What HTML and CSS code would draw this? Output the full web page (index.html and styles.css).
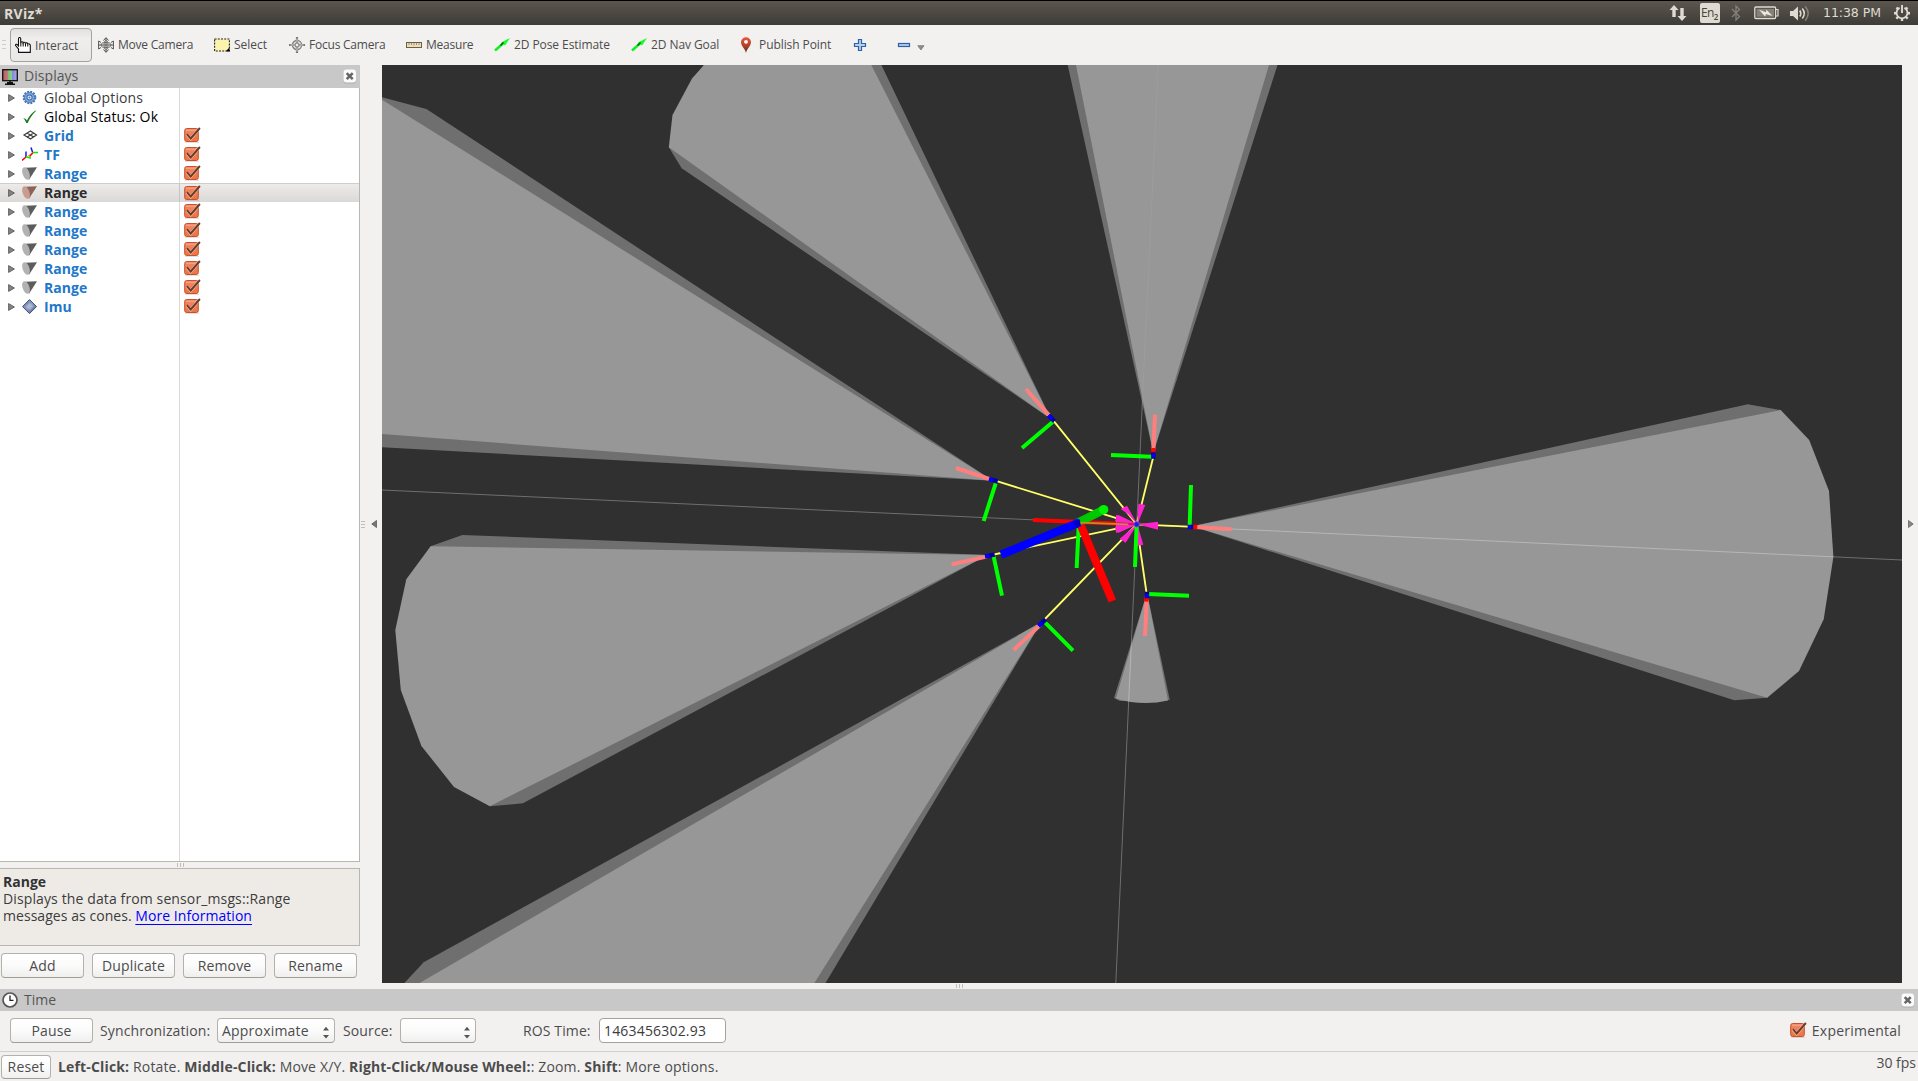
FILE: index.html
```html
<!DOCTYPE html>
<html lang="en">
<head>
<meta charset="utf-8">
<title>RViz*</title>
<link rel="stylesheet" href="styles.css">
</head>
<body>
<svg class="defs" aria-hidden="true">
  <defs>
    <linearGradient id="g-check" x1="0" y1="0" x2="0" y2="1"><stop offset="0" stop-color="#f0886a"/><stop offset="1" stop-color="#ee7340"/></linearGradient>
    <linearGradient id="g-pin" x1="0" y1="0" x2="0" y2="1"><stop offset="0" stop-color="#e8573a"/><stop offset=".55" stop-color="#b04028"/><stop offset="1" stop-color="#4c3520"/></linearGradient>
    <linearGradient id="g-screen"><stop offset="0" stop-color="#b85c66"/><stop offset=".33" stop-color="#c07878"/><stop offset=".34" stop-color="#74c074"/><stop offset=".66" stop-color="#8ed08e"/><stop offset=".67" stop-color="#8888d8"/><stop offset="1" stop-color="#aaaaee"/></linearGradient>
    <linearGradient id="g-imu" x1="0" y1="0" x2="1" y2="1"><stop offset="0" stop-color="#657ca4"/><stop offset=".5" stop-color="#8fa1c4"/><stop offset="1" stop-color="#46598a"/></linearGradient>
  </defs>
  <symbol id="check" viewBox="0 0 17 16">
    <path d="M1 15.300h14" stroke="#000" stroke-opacity=".15"/>
    <rect x=".7" y="1.500" width="13.600" height="13" rx="2" fill="url(#g-check)" stroke="#c8502a"/>
    <path d="M2 3.200h11" stroke="#f9b294" stroke-width=".8"/>
    <path d="M3 7.500l3.700 4.200L14 3" fill="none" stroke="#f6b196" stroke-width="3.200"/>
    <path d="M3 7.200l3.700 4.300L15.900 1" fill="none" stroke="#683c2c" stroke-width="1.900"/>
  </symbol>
  <symbol id="arrow" viewBox="0 0 7 8"><path d="M.6.600v6.800L6.400 4z" fill="#858585" stroke="#5a5a5a" stroke-width=".9"/></symbol>
  <symbol id="gear" viewBox="0 0 16 16">
    <circle cx="7.500" cy="7.500" r="5.700" fill="#8fb2de" stroke="#4474b4" stroke-width="2.200" stroke-dasharray="1.900 1.080"/>
    <circle cx="7.500" cy="7.500" r="4.800" fill="#8fb2de" stroke="#4f7dbb" stroke-width=".9"/>
    <circle cx="7.500" cy="7.500" r="2.600" fill="#dbe8f7" stroke="#3f6eae" stroke-width="1.100"/>
    <circle cx="7.500" cy="7.500" r="1" fill="#4f7dbb"/>
  </symbol>
  <symbol id="ok" viewBox="0 0 16 16"><path d="M1.200 9.300C2.500 9 3.800 9.800 4.900 11.500 7.300 7 10.200 3.600 13.600 1.500l.4.500C10.500 5.200 7.800 9.200 5.700 14H4.300C3.400 11.800 2.500 10.300 1.200 9.300z" fill="#1c7a1c"/></symbol>
  <symbol id="grid" viewBox="0 0 16 16"><path d="M8.500 3l6 4-6 4-6.500-4zM5 5l6.700 4M11.700 5l-6.500 4" fill="none" stroke="#3c3c3c" stroke-width="1.200"/></symbol>
  <symbol id="tf" viewBox="0 0 16 16">
    <path d="M0 13.500L4 10 M7.500 9.500L11 5.500" stroke="#f00" stroke-width="1.500"/>
    <path d="M4 10V4.500M10.500 5L9 .500" stroke="#1818e8" stroke-width="1.500"/>
    <path d="M4 10l5 1M11 5.500h5" stroke="#0e0" stroke-width="1.400"/>
    <path d="M4 10.500L8 7.500" stroke="#c8b820"/>
  </symbol>
  <symbol id="range" viewBox="0 0 16 16">
    <path d="M3.500 1.800L15 1.200 7 13.800z" fill="var(--side, #5c5c5c)"/>
    <ellipse cx="4" cy="7.500" rx="3.400" ry="6.600" transform="rotate(-19 4 7.500)" fill="var(--face, #b2b2b2)"/>
  </symbol>
  <symbol id="imu" viewBox="0 0 16 16"><path d="M7.500.600l7 7-7 7-7-7z" fill="url(#g-imu)" stroke="#3d4a6a"/><path d="M4 7.500l3.500-3.500 4 3.500L8 11z" fill="#fff" opacity=".28"/></symbol>
  <symbol id="close" viewBox="0 0 14 15">
    <rect x=".5" y="1" width="12.500" height="13.500" rx="3" fill="#999" opacity=".55"/>
    <rect x=".5" y=".5" width="12.500" height="13" rx="3" fill="#fbfbfb"/>
    <path d="M3.700 4.200l6 6M9.700 4.200l-6 6" stroke="#666" stroke-width="2.600"/>
  </symbol>
  <symbol id="nav" viewBox="0 0 16 16"><path d="M1 13.500L9 6.500" stroke="#1e2" stroke-width="2.500"/><path d="M7 5.500l9-4.500-5 7.500z" fill="#1f2"/><path d="M6.500 8.500l3-3" stroke="#075c10" stroke-width="1.500"/></symbol>
</svg>

<header class="titlebar">
  <span class="title">RViz*</span>
  <div class="indicators">
    <svg class="i-net" viewBox="0 0 18 18"><path d="M5 1l4.500 5H6.700v7H3.300V6H.5zM13 17l-4.500-5h2.800V4h3.400v8h2.800z" fill="#dfdbd2"/></svg>
    <span class="lang">En<sub>2</sub></span>
    <svg class="i-bt" viewBox="0 0 10 18"><path d="M1 5l7.500 7.500L5 16V2l3.500 3.500L1 13" fill="none" stroke="#85827a" stroke-width="1.300"/></svg>
    <svg class="i-bat" viewBox="0 0 25 14"><rect x=".8" y="1" width="20.800" height="11.500" rx="1" fill="none" stroke="#dfdbd2" stroke-width="1.300"/><rect x="2.500" y="2.800" width="17.500" height="8" fill="#85827a"/><path d="M22 3.500h2v6.500h-2" fill="none" stroke="#dfdbd2" stroke-width="1.200"/><path d="M5 3.800l7 2.500.5-2.500 6 6.200-6.500-2-.8 2.600z" fill="#eeeae2"/></svg>
    <svg class="i-vol" viewBox="0 0 20 17"><path d="M0 6h3l5-4.500v14L3 11H0z" fill="#dfdbd2"/><path d="M9.800 5.500q2 3 0 6M12.300 3.500q4 5 0 10" fill="none" stroke="#dfdbd2" stroke-width="1.600"/><path d="M15.200 1.300q6 7.200 0 14.400" fill="none" stroke="#85827a" stroke-width="1.500"/></svg>
    <span class="clock">11:38 PM</span>
    <svg class="i-power" viewBox="0 0 16 16"><path d="M10.400 2.900a5.500 5.500 0 1 1-4.800 0M8 0v8" fill="none" stroke="#dfdbd2" stroke-width="1.900"/><path d="M2.500 2.500l1.700 1.700M0 8.300h2.500M2.300 13.700L4 12M8 13.500V16M13.700 13.700L12 12M13.500 8.300H16M13.500 2.500l-1.700 1.700" stroke="#dfdbd2" stroke-width="2.400"/></svg>
  </div>
</header>

<nav class="toolbar">
  <div class="grip"></div>
  <div class="tool active"><svg viewBox="0 0 16 16"><path d="M3.500 15.400V12L.6 8.500c-.3-1.600 1.200-1.600 2-.6L3.500 9V1.500c.2-1.300 2-1.300 2.200 0V6l.4-.8c.5-.8 2-.6 2 .5.400-.7 2.200-.6 2.300.6.500-.8 2.200-.6 2.300.7 1-.6 2.600-.1 2.600 1.400v7z" fill="#fff" stroke="#111" stroke-width="1.100"/><path d="M5.800 6v3.500M8.200 6v3.500M10.500 6.500v3M12.800 7.500v2" stroke="#111"/></svg><span>Interact</span></div>
  <div class="tool tight"><svg viewBox="0 0 16 16"><path d="M8 1v14M0 8h16M5.500 3.500L8 .600l2.500 2.900M5.500 12.500L8 15.400l2.500-2.900M3 5.500L.6 4v8L3 10.500M13 5.500L15.400 4v8L13 10.500" fill="none" stroke="#555"/><ellipse cx="8" cy="8" rx="5" ry="2.500" fill="none" stroke="#666"/><ellipse cx="8" cy="8" rx="2" ry="5" fill="none" stroke="#777"/></svg><span>Move Camera</span></div>
  <div class="tool"><svg viewBox="0 0 16 16"><rect x=".6" y="2" width="14.800" height="12" fill="#fcf4ae" stroke="#222" stroke-width="1.100" stroke-dasharray="2 1.200"/><path d="M12.500 14.500v-1l3-3v4z" fill="#000"/></svg><span>Select</span></div>
  <div class="tool tight"><svg viewBox="0 0 16 16"><circle cx="8" cy="8" r="4.600" fill="#ddd" stroke="#777" stroke-width="1.200"/><path d="M0 8h16M8 0v16" stroke="#777" stroke-width="2.200"/><path d="M1.500 8h13M8 1.500v13" stroke="#e4e4e4" stroke-width=".9"/><circle cx="8" cy="8" r="2" fill="#eee" stroke="#777"/></svg><span>Focus Camera</span></div>
  <div class="tool tight"><svg viewBox="0 0 16 16"><rect x=".5" y="5.500" width="15" height="5" fill="#eee0b4" stroke="#675f52"/><path d="M3 6v2M5.500 6v2M8 6v2.500M10.500 6v2M13 6v2" stroke="#8c8069" stroke-width=".8"/></svg><span>Measure</span></div>
  <div class="tool snug"><svg><use href="#nav"/></svg><span>2D Pose Estimate</span></div>
  <div class="tool snug"><svg><use href="#nav"/></svg><span>2D Nav Goal</span></div>
  <div class="tool snug pin"><svg viewBox="0 0 16 16"><path d="M8 16C7.300 12 3 9 3 5.300a5 5 0 0 1 10 0C13 9 8.700 12 8 16z" fill="url(#g-pin)"/><circle cx="8" cy="4.800" r="1.900" fill="#fff"/></svg><span>Publish Point</span></div>
  <div class="tool"><svg viewBox="0 0 16 16"><path d="M6.500 2.500h3v4h4v3h-4v4h-3v-4h-4v-3h4z" fill="#b5cfec" stroke="#2d61a8" stroke-width="1.200"/></svg></div>
  <div class="tool"><svg viewBox="0 0 16 16"><rect x="2.500" y="6.500" width="11" height="3" fill="#b5cfec" stroke="#2d61a8" stroke-width="1.200"/></svg><svg class="drop" viewBox="0 0 8 6"><path d="M.8.700h6.200L3.900 4.900z" fill="#909090" stroke="#777" stroke-width=".8"/></svg></div>
</nav>

<main class="workspace">
  <aside class="displays">
    <div class="dock-title"><svg class="dock-icon" viewBox="0 0 16 16"><rect x=".7" y=".7" width="14.600" height="11" fill="url(#g-screen)" stroke="#111" stroke-width="1.300"/><path d="M8 11.500v3M3 15.200h10M5 13.700h6" stroke="#111" stroke-width="1.400"/></svg><span>Displays</span><svg class="close"><use href="#close"/></svg></div>
    <div class="tree">
      <div class="row plain"><svg class="exp"><use href="#arrow"/></svg><svg class="ico"><use href="#gear"/></svg><span class="name">Global Options</span></div>
      <div class="row plain status"><svg class="exp"><use href="#arrow"/></svg><svg class="ico"><use href="#ok"/></svg><span class="name">Global Status: Ok</span></div>
      <div class="row"><svg class="exp"><use href="#arrow"/></svg><svg class="ico"><use href="#grid"/></svg><span class="name">Grid</span><svg class="chk"><use href="#check"/></svg></div>
      <div class="row"><svg class="exp"><use href="#arrow"/></svg><svg class="ico"><use href="#tf"/></svg><span class="name">TF</span><svg class="chk"><use href="#check"/></svg></div>
      <div class="row"><svg class="exp"><use href="#arrow"/></svg><svg class="ico"><use href="#range"/></svg><span class="name">Range</span><svg class="chk"><use href="#check"/></svg></div>
      <div class="row selected"><svg class="exp"><use href="#arrow"/></svg><svg class="ico"><use href="#range"/></svg><span class="name">Range</span><svg class="chk"><use href="#check"/></svg></div>
      <div class="row"><svg class="exp"><use href="#arrow"/></svg><svg class="ico"><use href="#range"/></svg><span class="name">Range</span><svg class="chk"><use href="#check"/></svg></div>
      <div class="row"><svg class="exp"><use href="#arrow"/></svg><svg class="ico"><use href="#range"/></svg><span class="name">Range</span><svg class="chk"><use href="#check"/></svg></div>
      <div class="row"><svg class="exp"><use href="#arrow"/></svg><svg class="ico"><use href="#range"/></svg><span class="name">Range</span><svg class="chk"><use href="#check"/></svg></div>
      <div class="row"><svg class="exp"><use href="#arrow"/></svg><svg class="ico"><use href="#range"/></svg><span class="name">Range</span><svg class="chk"><use href="#check"/></svg></div>
      <div class="row"><svg class="exp"><use href="#arrow"/></svg><svg class="ico"><use href="#range"/></svg><span class="name">Range</span><svg class="chk"><use href="#check"/></svg></div>
      <div class="row"><svg class="exp"><use href="#arrow"/></svg><svg class="ico"><use href="#imu"/></svg><span class="name">Imu</span><svg class="chk"><use href="#check"/></svg></div>
      <div class="row filler"></div>
    </div>
    <div class="split"><i class="dots"></i></div>
    <div class="help"><b>Range</b><span>Displays the data from sensor_msgs::Range</span><span class="more">messages as cones. <a>More Information</a></span></div>
    <div class="buttons"><button>Add</button><button>Duplicate</button><button>Remove</button><button>Rename</button></div>
  </aside>
  <div class="gutter left"><i class="hdots"></i><svg viewBox="0 0 6 8"><path d="M5.500.500v7L.8 4z" fill="#777" stroke="#5a5a5a" stroke-width=".8"/></svg></div>
  <svg class="view" viewBox="382 65 1520 918">
    <g fill="#6f6f6f">
      <path d="M1192 526.300L1747.800 404.300 1780.700 410 1767.200 697.700 1734.300 700.300z"/>
      <path d="M988 555L462.300 535 430.600 546.300 489.800 806.300 522.900 803.300z"/>
      <path d="M1041.500 622L423.700 962.300 404.400 983H825.500z"/>
      <path d="M993 480.800L426.400 109 382 97.300V447.300z"/>
      <path d="M1051 419L881.400 65H703.500L668.800 147.300 681.700 168.300z"/>
      <path d="M1153.300 453L1067.700 65H1277.500z"/>
      <path d="M1147 593L1114 698 1120 701 1169.800 700z"/>
    </g>
    <g fill="#979797">
      <path d="M1192 526.300L1780.700 410 1809.200 440 1829 491 1833.400 557 1823.700 619.300 1799 671 1767.200 697.700z"/>
      <path d="M988 555L430.600 546.300 406.300 579.300 395.300 630 400.800 690 421.400 746 454 787 489.800 806.300z"/>
      <path d="M1041.500 622L419.600 983H814.400z"/>
      <path d="M993 480.800L382 99.700V434z"/>
      <path d="M1051 419L871.300 65H704L692 78.600 672.500 115 668.800 147.300z"/>
      <path d="M1153.300 453L1076 65H1269z"/>
      <path d="M1147 593L1115.800 698.500Q1142 706.500 1168 700.500z"/>
    </g>
    <path d="M382 490L1137 524.600 1902 560M1142 410L1136.800 524 1115.800 983" fill="none" stroke="#fff" stroke-opacity=".3"/>
    <path d="M1158.300 65L1142 410" stroke="#a0a0a0" stroke-opacity=".6"/>
    <g transform="translate(920 370) scale(.33333)" fill="none">
      <g stroke="#ffff66" stroke-width="5.500">
        <path d="M402 154L650 463M228 333L650 463M215 555L650 463M372 750L650 463M700 260L650 463M808 470L650 463M680 672L650 463"/>
      </g>
      <path d="M652 463L624 432 602 417 621 407zM652 463L594 457 585 452 594 434zM652 463L585 470 588 487 596 488zM652 463L599 506 617 518zM652 463L655 401 676 405zM652 463L714 455V479zM652 463L650 527 670 524z" fill="#ff22cc" stroke="none"/>
      <path d="M339 450L640 463" stroke="#f00" stroke-width="12"/>
      <path d="M588 434L652 463 588 488z" fill="#ff22cc" stroke="none"/>
      <path d="M590 460L645 463" stroke="#d01060" stroke-width="6"/>
      <g stroke="#0f0" stroke-width="12">
        <path d="M398 156L306 234M227 340L191 453M221 560L246 677M375 757L459 842M696 260L573 255M809 467L813 345M684 672L807 677M476 470L470 594M650 463L645 591"/>
      </g>
      <g stroke="#ff7f7f" stroke-width="12">
        <path d="M388 137L318 57M212 328L108 294M200 560L95 583M362 764L281 840M700 240L705 134M825 471L935 478M680 690L675 798"/>
      </g>
      <path d="M700 251V234M814 471H832M680 678L679 695" stroke="#f00" stroke-width="13"/>
      <g stroke="#0000a0" stroke-width="13"><path d="M386 136L403 154M208 327L233 334M195 559L224 554M356 768L377 748M700 266V247M803 471H820M681 685V665"/></g>
      <g stroke="#00f" stroke-width="12"><path d="M385 136L396 147M207 327L219 331M196 559L209 556M356 768L366 758M700 262V252M804 471H813M681 682V673"/></g>
      <path d="M472 459L551 419" stroke="#00c800" stroke-width="25"/>
      <circle cx="551" cy="419" r="14" fill="#00f400"/>
      <path d="M480 458L625 463" stroke="#c09020" stroke-width="5"/>
      <path d="M482 465L577 693" stroke="#f00" stroke-width="24"/>
      <path d="M479 457L243 554" stroke="#00f" stroke-width="25"/>
      <path d="M458 456l22-8 1 16-9 10" fill="#0000b8"/>
      <circle cx="650" cy="463" r="8" fill="#1020e0" stroke="#9a30e0" stroke-width="3"/>
    </g>
  </svg>
  <div class="gutter right"><svg viewBox="0 0 6 8"><path d="M.5.500v7L5.200 4z" fill="#888" stroke="#666" stroke-width=".8"/></svg></div>
</main>

<div class="split wide"><i class="dots"></i></div>
<section class="time">
  <div class="dock-title"><svg class="dock-icon" viewBox="0 0 16 16"><circle cx="8" cy="8" r="7" fill="#fff" stroke="#555" stroke-width="1.700"/><path d="M8 3.500V8.300H11.500" fill="none" stroke="#222" stroke-width="1.300"/></svg><span>Time</span><svg class="close"><use href="#close"/></svg></div>
  <div class="controls">
    <button>Pause</button>
    <label class="l-sync">Synchronization:</label>
    <div class="combo c-sync"><span>Approximate</span><svg viewBox="0 0 6 13"><path d="M0 4.500L3 .800 6 4.500zM0 9h6L3 12.500z" fill="#555"/></svg></div>
    <label class="l-src">Source:</label>
    <div class="combo c-src"><span></span><svg viewBox="0 0 6 13"><path d="M0 4.500L3 .800 6 4.500zM0 9h6L3 12.500z" fill="#555"/></svg></div>
    <label class="l-ros">ROS Time:</label>
    <div class="field">1463456302.93</div>
    <div class="experimental"><svg class="chk"><use href="#check"/></svg><span>Experimental</span></div>
  </div>
</section>
<footer class="status-bar">
  <button>Reset</button>
  <p class="hint"><b>Left-Click:</b> Rotate. <b>Middle-Click:</b> Move X/Y. <b>Right-Click/Mouse Wheel:</b>: Zoom. <b>Shift</b>: More options.</p>
  <span class="fps">30 fps</span>
</footer>
</body>
</html>
```
FILE: styles.css
```css
* { box-sizing: border-box; }
body {
  margin: 0; width: 1918px; height: 1081px; overflow: hidden;
  display: flex; flex-direction: column;
  background: #f2f1f0; color: #4c4c4c;
  font: 14px/17px "Open Sans", "Noto Sans", sans-serif; letter-spacing: .12px;
}
svg { display: block; flex: none; }
span, label { white-space: nowrap; }
.defs { position: absolute; width: 0; height: 0; }

.titlebar {
  height: 25px; flex: none; display: flex; align-items: center; justify-content: space-between;
  border-top: 1px solid #000; padding: 0 8px 0 4px;
  background: linear-gradient(#5b564e, #3e3c38); color: #dfdbd2;
}
.title { font-weight: 700; font-size: 14px; letter-spacing: .3px; }
.indicators { display: flex; align-items: center; }
.i-net { width: 18px; height: 18px; margin-right: 13px; }
.lang {
  width: 20px; height: 20px; margin-right: 11px; padding-left: 1px; border-radius: 2px;
  background: #dfdbd2; color: #46433e; font-size: 12px; line-height: 20px; letter-spacing: -.7px;
}
.lang sub { font-size: 8px; line-height: 0; vertical-align: -3px; font-weight: 600; }
.i-bt { width: 10px; height: 18px; margin-right: 13px; }
.i-bat { width: 25px; height: 14px; margin-right: 11px; }
.i-vol { width: 20px; height: 17px; margin-right: 13px; }
.clock { font: 12.5px/17px "DejaVu Sans", sans-serif; width: 58px; margin: -1px 13px 0 0; letter-spacing: -.05px; }
.i-power { width: 16px; height: 16px; }

.toolbar {
  height: 40px; flex: none; display: grid; align-items: center; padding: 0 0 1px;
  grid-template-columns: 10px 84px 116px 75px 117px 88px 137px 107px 114px 44px 60px;
}
.grip { width: 4px; height: 9px; margin-left: 2px; background: repeating-linear-gradient(#d0cecb 0 1px, transparent 1px 4px); }
.tool { display: flex; align-items: center; gap: 4px; height: 34px; padding-left: 4px; font-size: 12px; letter-spacing: 0; }
.tool svg { width: 16px; height: 16px; }
.tight { letter-spacing: -.22px; }
.snug { letter-spacing: -.08px; }
.tool.pin { gap: 5px; }
.tool.active {
  width: 82px; margin-top: 1px; gap: 4px; border: 1px solid #a5a19c; border-radius: 4px;
  background: linear-gradient(#e2e0de, #efeeed 30%, #e9e8e6);
}
.tool .drop { width: 8px; height: 6px; margin: 7px 0 0 1px; }

.workspace { height: 918px; flex: none; display: flex; }
.displays { width: 360px; display: flex; flex-direction: column; }
.dock-title { height: 23px; flex: none; display: flex; align-items: center; gap: 6px; padding: 0 3px 0 2px; background: #c8c8c8; color: #555; letter-spacing: .05px; }
.dock-title span { margin-top: -2px; }
.dock-icon { width: 16px; height: 16px; }
.close { width: 14px; height: 15px; margin-left: auto; }
.tree { height: 774px; display: flex; flex-direction: column; background: #fff; border: solid #b9b5af; border-width: 0 1px 1px 0; }
.row {
  height: 19px; flex: none; display: grid; align-items: center; padding-left: 8px;
  grid-template-columns: 14px 22px 135px 1fr; color: #2277c8; font-weight: 700; letter-spacing: .07px;
  background: linear-gradient(#dcdad8, #dcdad8) 179px 0 / 1px 100% no-repeat;
}
.row.plain { color: #3c3c3c; font-weight: 400; letter-spacing: .13px; }
.row.status { color: #000; }
.row.filler { flex: 1; }
.row.selected {
  --side: #8d6257; --face: #c99c90;
  color: #2c2c2c; border-top: 1px solid #cfcdca;
  background: linear-gradient(#c6c4c1, #c6c4c1) 179px 0 / 1px 100% no-repeat, linear-gradient(#ecebea, #dbd9d7);
}
.row .name { margin-top: -1px; }
.exp { width: 7px; height: 8px; }
.ico { width: 16px; height: 16px; }
.chk { width: 17px; height: 16px; margin-left: 5px; margin-top: -1px; }
.split { height: 6px; flex: none; display: flex; align-items: center; justify-content: center; }
.dots { width: 7px; height: 4px; background: repeating-linear-gradient(90deg, #c0beba 0 1px, transparent 1px 3px); }
.hdots { width: 4px; height: 7px; background: repeating-linear-gradient(#c0beba 0 1px, transparent 1px 3px); }
.help {
  height: 78px; display: flex; flex-direction: column; padding: 4px 3px; letter-spacing: .12px;
  border: solid #b9b5af; border-width: 1px 1px 1px 0; background: #eeebe7; color: #3c3c3c;
}
.help a { color: #00f; text-decoration: underline; text-underline-offset: 3px; }
.help b { color: #333; letter-spacing: 0; }
.help .more { letter-spacing: .05px; }
.buttons { display: flex; gap: 8px; padding: 7px 1px 0; }
button, .combo, .field {
  height: 25px; border: 1px solid #b4b0aa; border-bottom-color: #a19d97; border-radius: 4px;
  background: linear-gradient(#fff, #fbfbfb 50%, #f0efee); color: #4c4c4c; font: inherit; letter-spacing: .15px;
}
button { width: 83px; padding: 0; flex: none; }

.gutter { flex: none; display: flex; align-items: center; }
.gutter svg { width: 6px; height: 8px; }
.left { width: 22px; padding-left: 1px; gap: 6px; }
.right { width: 16px; padding-left: 6px; }
.view { width: 1520px; height: 918px; background: #303030; }

.wide { height: 6px; }
.time { height: 63px; flex: none; display: flex; flex-direction: column; border-bottom: 1px solid #d2d0cd; }
.time .dock-title { height: 22px; }
.time .dock-title span { margin-top: -1px; }
.controls { height: 39px; display: flex; align-items: center; padding: 0 17px 0 10px; }
.l-sync { width: 117px; padding-left: 7px; }
.l-src { width: 65px; padding-left: 8px; }
.l-ros { width: 123px; padding-left: 47px; }
.controls label, .experimental span { margin-top: -1px; }
.combo { display: flex; align-items: center; justify-content: space-between; padding: 0 5px 0 4px; letter-spacing: .2px; }
.combo svg { width: 6px; height: 13px; margin-top: 4px; }
.c-sync { width: 118px; margin-left: 7px; }
.c-src { width: 76px; }
.field { width: 127px; padding: 3px 4px; background: #fff; color: #3c3c3c; border-color: #a5a19c; letter-spacing: .18px; }
.experimental { display: flex; align-items: center; gap: 5px; margin-left: auto; letter-spacing: .22px; }
.status-bar { height: 29px; flex: none; display: flex; align-items: center; padding: 0 2px 0 1px; }
.status-bar button { width: 50px; height: 24px; }
.hint { margin: -1px 0 0 7px; white-space: nowrap; letter-spacing: .155px; }
.fps { margin: -8px 0 0 auto; letter-spacing: 0; }
```
